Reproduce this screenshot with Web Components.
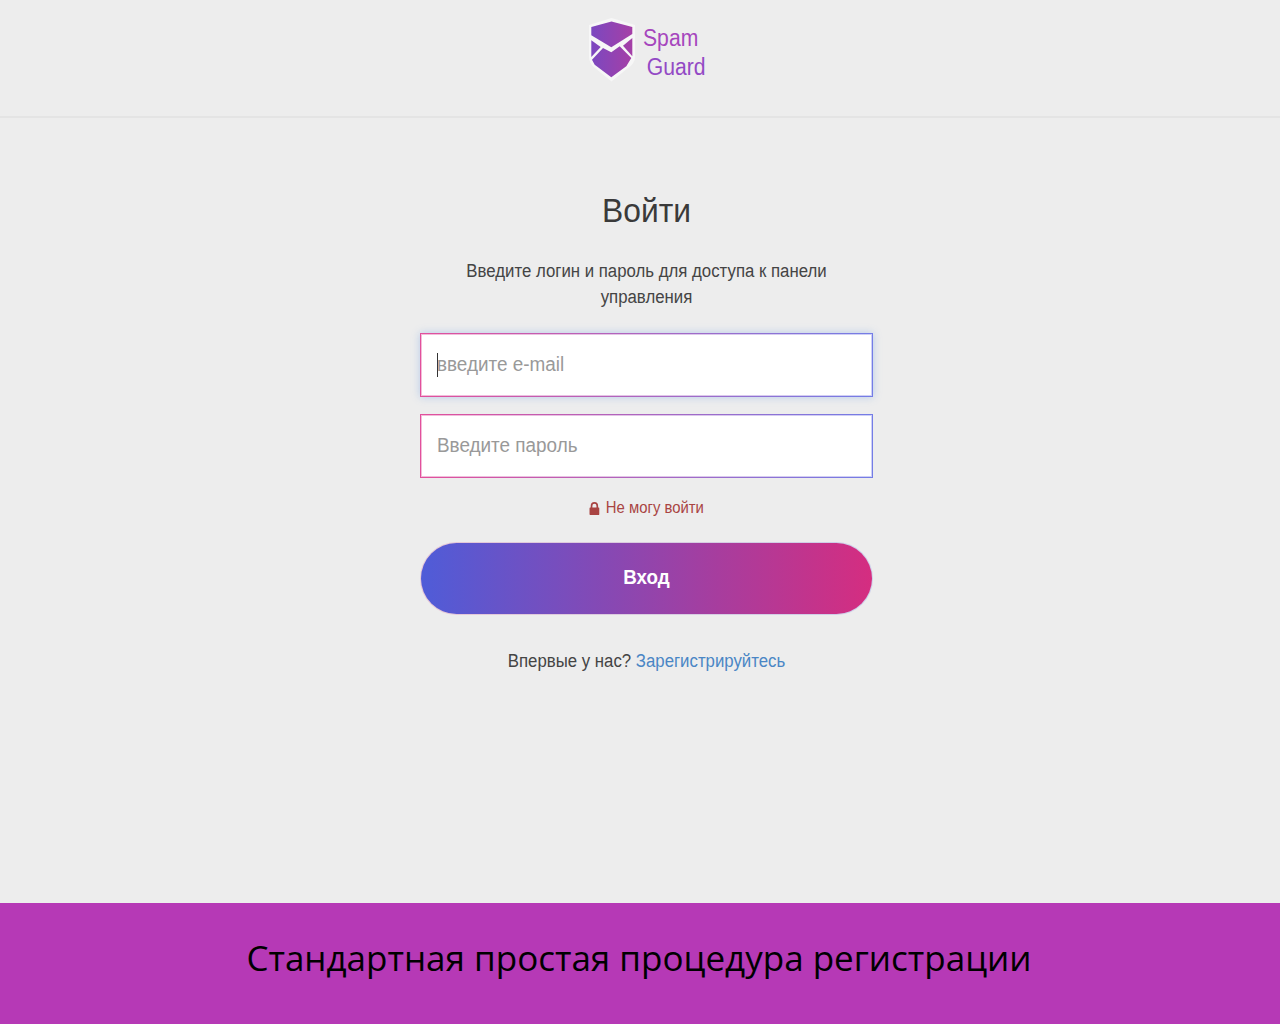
<!DOCTYPE html>
<html lang="ru">
<head>
<meta charset="utf-8">
<title>Spam Guard</title>
<style>
  html, body { margin: 0; height: 100%; }
  body { background: #ededed; font-family: "Liberation Sans", Arial, sans-serif; }
  .page { height: 1024px; display: flex; flex-direction: column; overflow: hidden; }
</style>
</head>
<body>
<div class="page">
  <sg-header></sg-header>
  <sg-login>
    <sg-field placeholder="введите e-mail" focused></sg-field>
    <sg-field placeholder="Введите пароль"></sg-field>
  </sg-login>
  <sg-caption>Стандартная простая процедура регистрации</sg-caption>
</div>
<script>
class SgHeader extends HTMLElement {
  constructor() {
    super();
    this.attachShadow({ mode: 'open' });
    this.shadowRoot.innerHTML = `
      <style>
        :host {
          display: flex;
          justify-content: center;
          height: 116px;
          padding-left: 14px;
          border-bottom: 2px solid #e4e4e4;
          flex: none;
        }
        .logo { display: flex; align-items: flex-start; gap: 7px; padding-top: 18px; }
        svg { width: 48px; height: 64px; display: block; }
        .name {
          width: 63px;
          font-size: 23px;
          line-height: 29px;
          padding-top: 6px;
          white-space: nowrap;
          transform: scaleX(.92);
          transform-origin: left;
          color: #a646bd;
        }
        .name span { display: block; }
        .name span + span { padding-left: 4px; color: #9349c5; }
      </style>
      <div class="logo">
        <svg viewBox="0 0 48 64">
          <defs>
            <linearGradient id="lg" gradientUnits="userSpaceOnUse" x1="3" x2="45" y1="0" y2="0">
              <stop offset="0" stop-color="#7b48c0"/>
              <stop offset="1" stop-color="#a63fa6"/>
            </linearGradient>
          </defs>
          <path d="M23.500 0 L47 7 V38 Q47 46 40 50 L23.500 63.500 L7 50 Q1 46 1 38 V7 Z" fill="#f7f7f7"/>
          <path d="M3.300 9 L23.500 3.500 L44.300 9 V16 L23.300 29.300 L3.300 17.300 Z" fill="url(#lg)"/>
          <path d="M3.300 22.300 L12.700 29 L3.300 39 Z" fill="url(#lg)"/>
          <path d="M44.300 20 L35 27.700 L44.300 38.300 Z" fill="url(#lg)"/>
          <path d="M15 30 L23.300 34.300 L31.700 28.300 L43.300 40 L38.300 48.300 L23.300 59.300 L6.700 46.700 L4 41.700 Z" fill="url(#lg)"/>
        </svg>
        <div class="name"><span>Spam</span><span>Guard</span></div>
      </div>
    `;
  }
}
customElements.define('sg-header', SgHeader);

class SgField extends HTMLElement {
  constructor() {
    super();
    this.attachShadow({ mode: 'open' });
    this.shadowRoot.innerHTML = `
      <style>
        :host {
          display: block;
          height: 64px;
          box-sizing: border-box;
          background: #fff;
          border: 1px solid;
          border-image: linear-gradient(90deg, #e2509c, #747de6) 1;
          font-size: 20px;
          line-height: 59px;
          color: #999;
          text-align: left;
        }
        :host([focused]) { box-shadow: 0 0 8px rgba(102, 155, 230, .4); }
        .inner {
          position: relative;
          height: 100%;
          box-sizing: border-box;
          padding: 0 15px;
          border: 1px solid;
          border-image: linear-gradient(90deg, #f3bcd9, #cdd0f6) 1;
        }
        .caret {
          display: none;
          position: absolute;
          left: 15px;
          top: 18px;
          width: 1px;
          height: 24px;
          background: #333;
        }
        :host([focused]) .caret { display: block; }
        #ph { display: block; transform: scaleX(.945); transform-origin: left; }
      </style>
      <div class="inner"><span class="caret"></span><span id="ph"></span></div>
    `;
  }
  connectedCallback() {
    this.shadowRoot.getElementById('ph').textContent = this.getAttribute('placeholder');
  }
}
customElements.define('sg-field', SgField);

class SgLogin extends HTMLElement {
  constructor() {
    super();
    this.attachShadow({ mode: 'open' });
    this.shadowRoot.innerHTML = `
      <style>
        :host {
          display: flex;
          flex-direction: column;
          width: 453px;
          flex: 1;
          margin-left: 420px;
          padding-top: 72px;
          box-sizing: border-box;
          color: #444;
          text-align: center;
        }
        h1 { margin: 0; font-size: 34px; line-height: 40px; font-weight: 400; color: #3a3a3a; transform: scaleX(.935); }
        p { margin: 28px 0 23px; padding: 0 16px; font-size: 18px; line-height: 26px; transform: scaleX(.933); }
        .fields { display: flex; flex-direction: column; gap: 17px; }
        .forgot {
          display: flex; justify-content: center; align-items: center; gap: 7px;
          margin-top: 20px; height: 20px;
          font-size: 16px; color: #a94442;
          transform: scaleX(.93);
        }
        .forgot svg { width: 11px; height: 13px; }
        button {
          margin-top: 24px;
          height: 73px;
          padding: 0 0 2px;
          border: 1px solid transparent;
          border-radius: 37px;
          background: linear-gradient(90deg, #4f5cd8, #d52d80) padding-box, linear-gradient(90deg, rgba(213, 90, 150, .25), rgba(110, 120, 225, .25)) border-box;
          color: #fff;
          font: bold 20px "Liberation Sans", Arial, sans-serif;
        }
        button span { display: block; transform: scaleX(.94); }
        .signup { margin-top: 34px; font-size: 18px; line-height: 24px; transform: scaleX(.933); }
        a { color: #4a86c5; text-decoration: none; }
      </style>
      <h1>Войти</h1>
      <p>Введите логин и пароль для доступа к панели управления</p>
      <div class="fields"><slot></slot></div>
      <div class="forgot">
        <svg viewBox="0 0 11 13"><path fill="#a94442" d="M1.500 5.500V4a4 4 0 0 1 8 0v1.500h.5a1 1 0 0 1 1 1V12a1 1 0 0 1-1 1H1a1 1 0 0 1-1-1V6.500a1 1 0 0 1 1-1zM3.300 5.500h4.400V4a2.200 2.200 0 0 0-4.400 0z"/></svg>
        <span>Не могу войти</span>
      </div>
      <button type="button"><span>Вход</span></button>
      <div class="signup">Впервые у нас? <a href="#">Зарегистрируйтесь</a></div>
    `;
  }
}
customElements.define('sg-login', SgLogin);

class SgCaption extends HTMLElement {
  constructor() {
    super();
    this.attachShadow({ mode: 'open' });
    this.shadowRoot.innerHTML = `
      <style>
        :host {
          display: flex;
          justify-content: center;
          align-items: center;
          flex: none;
          height: 121px;
          padding: 0 2px 13px 0;
          box-sizing: border-box;
          background: #b639b6;
          color: #000;
          font-family: "Open Sans", "Noto Sans", sans-serif;
          font-size: 35px;
        }
      </style>
      <slot></slot>
    `;
  }
}
customElements.define('sg-caption', SgCaption);
</script>
</body>
</html>
